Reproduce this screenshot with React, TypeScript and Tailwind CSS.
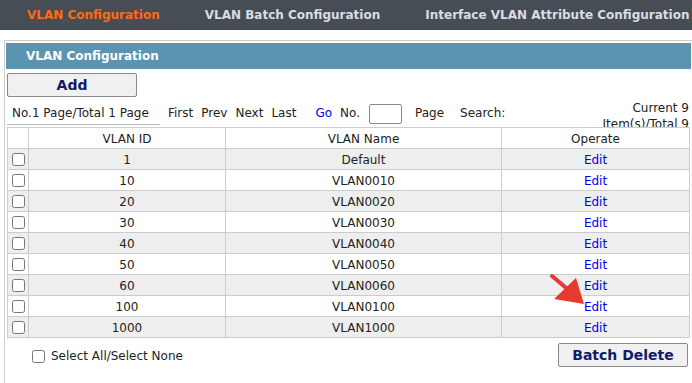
import { Fragment } from 'react'

const rows = [
  { id: '1', name: 'Default' },
  { id: '10', name: 'VLAN0010' },
  { id: '20', name: 'VLAN0020' },
  { id: '30', name: 'VLAN0030' },
  { id: '40', name: 'VLAN0040' },
  { id: '50', name: 'VLAN0050' },
  { id: '60', name: 'VLAN0060' },
  { id: '100', name: 'VLAN0100' },
  { id: '1000', name: 'VLAN1000' },
]

const cell = 'border border-[#cccccc] h-[21px] pt-[1px] pb-0 px-0 text-center align-middle'

export default function App() {
  return (
    <div className="relative w-[692px] h-[383px] overflow-hidden bg-white text-[12px] text-[#222] font-['DejaVu_Sans','Verdana',sans-serif]">
      {/* top tabs */}
      <nav className="h-[30px] bg-[#474d54] flex items-center text-[12px] font-bold whitespace-nowrap">
        <span className="ml-[27px] text-[#ff6a13]">VLAN Configuration</span>
        <span className="ml-[45px] text-[#d9dde2]">VLAN Batch Configuration</span>
        <span className="ml-[45px] text-[#d9dde2]">Interface VLAN Attribute Configuration</span>
      </nav>

      <div className="mt-[10px] ml-[4px] border-l border-t border-[#cccccc] pt-[2px] pl-[1px] pr-[1px] h-[400px]">
        <div className="h-[26px] bg-[#5a94b0] flex items-center pl-[20px] text-[12px] font-bold text-white">
          VLAN Configuration
        </div>

        <button className="mt-[4px] ml-[1px] w-[130px] h-[24px] bg-[#f0f0f0] border border-[#888] rounded-[2px] text-[14px] font-bold text-[#101b6b]">
          Add
        </button>

        {/* pagination */}
        <div className="h-[30px] ml-[1px] flex items-start overflow-hidden whitespace-nowrap">
          <div className="mt-[3px] h-[25px] w-[153px] border-b border-[#bbbbbb] pl-[5px] pt-[4px]">No.1 Page/Total 1 Page</div>
          <div className="mt-[7px] ml-[8px] flex items-center gap-[8px]">
            <span>First</span>
            <span>Prev</span>
            <span>Next</span>
            <span>Last</span>
            <span className="ml-[11px] text-[#0000ee]">Go</span>
            <span>No.</span>
          </div>
          <input className="mt-[7px] ml-[9px] w-[33px] h-[20px] border border-[#888] rounded-[2px]" />
          <span className="mt-[7px] ml-[13px]">Page</span>
          <span className="mt-[7px] ml-[16px]">Search:</span>
          <div className="ml-auto mr-[2px] mt-[3px] text-right leading-[16px]">
            <div>Current 9</div>
            <div>Item(s)/Total 9</div>
          </div>
        </div>

        <table className="ml-[1px] w-[682px] border-collapse table-fixed">
          <colgroup>
            <col className="w-[21px]" />
            <col className="w-[197px]" />
            <col className="w-[276px]" />
            <col className="w-[188px]" />
          </colgroup>
          <thead>
            <tr className="bg-white">
              <th className={`${cell} font-normal`}></th>
              <th className={`${cell} font-normal`}>VLAN ID</th>
              <th className={`${cell} font-normal`}>VLAN Name</th>
              <th className={`${cell} font-normal`}>Operate</th>
            </tr>
          </thead>
          <tbody>
            {rows.map((r, i) => (
              <Fragment key={r.id}>
                <tr className={i % 2 === 0 ? 'bg-[#eeeeee]' : 'bg-white'}>
                  <td className={cell}>
                    <input type="checkbox" className="block mx-auto w-[13px] h-[13px]" />
                  </td>
                  <td className={cell}>{r.id}</td>
                  <td className={cell}>{r.name}</td>
                  <td className={`${cell} text-[#0000ee]`}>Edit</td>
                </tr>
              </Fragment>
            ))}
          </tbody>
        </table>

        <div className="flex items-start ml-[1px] pt-[5px]">
          <label className="mt-[4px] ml-[25px] flex items-center gap-[6px]">
            <input type="checkbox" className="w-[13px] h-[13px]" />
            <span>Select All/Select None</span>
          </label>
          <button className="ml-auto mr-[3px] w-[130px] h-[24px] bg-[#f0f0f0] border border-[#888] rounded-[2px] text-[14px] font-bold text-[#101b6b]">
            Batch Delete
          </button>
        </div>
      </div>

      {/* red arrow pointer */}
      <svg className="absolute left-0 top-0 pointer-events-none" width="692" height="383">
        <line x1="552" y1="276" x2="571" y2="292" stroke="#e53a2f" strokeWidth="4" strokeLinecap="round" />
        <polygon points="576,278 554,299 584,304" fill="#e53a2f" />
      </svg>
    </div>
  )
}
